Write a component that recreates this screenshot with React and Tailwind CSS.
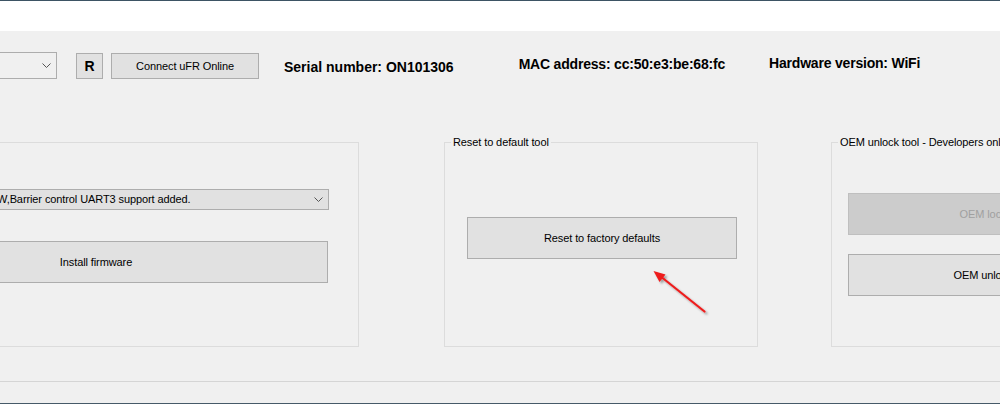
import React from 'react';

function Chevron() {
  return (
    <svg width="9" height="5" viewBox="0 0 9 5" className="shrink-0">
      <path d="M0.5 0.5 L4.5 4.5 L8.5 0.5" fill="none" stroke="#555" strokeWidth="1" />
    </svg>
  );
}

function Button({ children, className = '', disabled = false }) {
  return (
    <div
      className={
        'flex items-center justify-center border ' +
        (disabled ? 'bg-[#cccccc] border-[#bfbfbf] text-[#a0a0a0] ' : 'bg-[#e1e1e1] border-[#adadad] text-black ') +
        className
      }
    >
      {children}
    </div>
  );
}

function GroupBox({ title, className = '', children }) {
  return (
    <div className={'relative border border-[#dcdcdc] h-[205px] shrink-0 ' + className}>
      {title && (
        <span className="absolute top-[-8px] left-[6px] bg-[#f0f0f0] px-[2px] leading-[14px] whitespace-nowrap">
          {title}
        </span>
      )}
      {children}
    </div>
  );
}

function RedArrow() {
  // annotation drawn over the screenshot
  return (
    <svg className="absolute left-[640px] top-[260px]" width="80" height="64" viewBox="0 0 80 64">
      <defs>
        <filter id="sh" x="-20%" y="-20%" width="150%" height="150%">
          <feDropShadow dx="2" dy="2" stdDeviation="1.2" floodColor="#000" floodOpacity="0.35" />
        </filter>
      </defs>
      <g filter="url(#sh)">
        <line x1="64.5" y1="51.5" x2="22" y2="17.5" stroke="#ee1c1c" strokeWidth="2.2" strokeLinecap="round" />
        <polygon points="13.5,11 25.5,14.5 19.5,22" fill="#ee1c1c" />
      </g>
    </svg>
  );
}

export default function App() {
  return (
    <div className="relative w-[1000px] h-[404px] overflow-hidden bg-[#f0f0f0] text-[11px] tracking-[-0.1px] text-black font-['Liberation_Sans',Arial,sans-serif]">
      <div className="h-px bg-[#3d5464]" />
      <div className="h-[30px] bg-white" />

      {/* toolbar */}
      <div className="flex items-start mt-[21px] h-[27px]">
        <div className="w-[57px] h-[27px] border border-l-0 border-[#adadad] flex items-center justify-end pr-[5px]">
          <Chevron />
        </div>
        <Button className="ml-[19px] mt-px w-[27px] h-[26px] text-[14px] font-bold">R</Button>
        <Button className="ml-[8px] mt-px w-[148px] h-[26px]">Connect uFR Online</Button>
        <div className="ml-[25px] mt-[5px] text-[14px] tracking-normal font-bold whitespace-nowrap">Serial number: ON101306</div>
        <div className="ml-[65px] mt-[2px] text-[14px] tracking-[-0.2px] font-bold whitespace-nowrap">MAC address: cc:50:e3:be:68:fc</div>
        <div className="ml-[44px] mt-[1px] text-[14px] tracking-[-0.2px] font-bold whitespace-nowrap">Hardware version: WiFi</div>
      </div>

      {/* group boxes */}
      <div className="flex mt-[63px]">
        <GroupBox className="w-[559px] -ml-[200px]">
          <div className="flex flex-col items-end pr-[29px] pt-[46px]">
            <div className="w-[336px] h-[21px] bg-[#e1e1e1] border border-[#adadad] flex items-center justify-between pl-[3px] pr-[5px] whitespace-nowrap overflow-hidden">
              <span>W,Barrier control UART3 support added.</span>
              <Chevron />
            </div>
            <Button className="mt-[31px] mr-px w-[464px] h-[42px]">Install firmware</Button>
          </div>
        </GroupBox>

        <GroupBox title="Reset to default tool" className="ml-[85px] w-[314px]">
          <div className="pt-[74px] pl-[22px]">
            <Button className="w-[270px] h-[42px]">Reset to factory defaults</Button>
          </div>
        </GroupBox>

        <GroupBox title="OEM unlock tool - Developers only" className="ml-[73px] w-[320px]">
          <div className="flex flex-col gap-[19px] pt-[50px] pl-[16px]">
            <Button disabled className="w-[270px] h-[42px]">OEM lock</Button>
            <Button className="w-[270px] h-[42px]">OEM unlock</Button>
          </div>
        </GroupBox>
      </div>

      <div className="mt-[34px] h-px bg-[#d5d5d5]" />
      <div className="h-[21px]" />
      <div className="h-px bg-[#465a68]" />

      <RedArrow />
    </div>
  );
}
